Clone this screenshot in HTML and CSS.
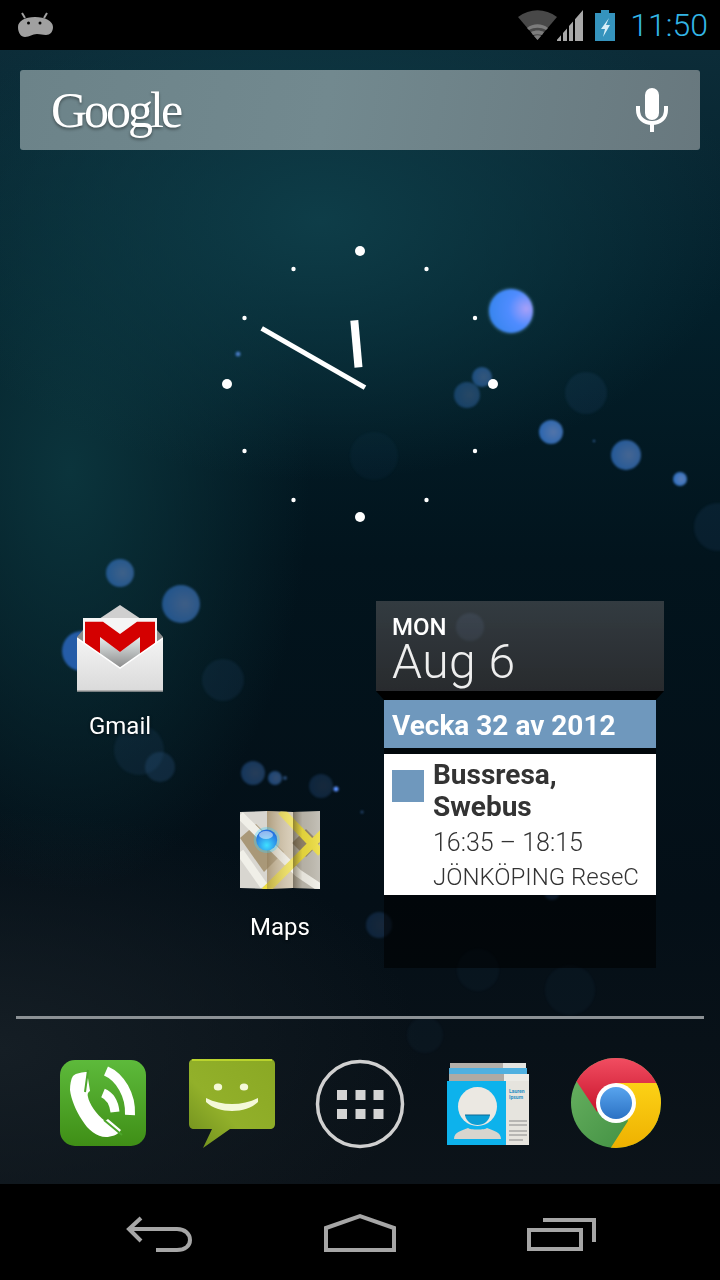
FILE: index.html
```html
<!DOCTYPE html>
<html lang="en">

<head>
    <meta charset="UTF-8">
    <title>Home</title>
    <link rel="stylesheet" href="styles.css">
</head>

<body>
    <div class="status">
        <svg class="st-android" viewBox="18 10 36 30">
            <path d="M22 13l3 5M47 13l-3 5" class="st-ear" />
            <path d="M18 27c0-6 7-10 17-10s18 4 18 10c0 5-3 8-7 8-4 0-5-1-9-1-5 0-7 3-12 3-4 0-7-4-7-10z" class="st-head" />
            <circle cx="28.500" cy="23" r="1.500" class="st-eye" />
            <circle cx="40" cy="23" r="1.500" class="st-eye" />
        </svg>
        <div class="status-right">
            <svg class="st-wifi" viewBox="517 8 40 34">
                <path d="M517 17c12-9 27-9 39 0l-19.500 23z" class="wifi-off" />
                <path d="M526 28c6-5 15-5 21 0l-2 2c-5-3-12-3-17 0z" class="wifi-mid" />
                <path d="M530 32c4-2 9-2 13 0l-2 3c-3-1-6-1-9 0z" class="wifi-mid" />
                <path d="M533 36c2-1 5-1 7 0l-3.500 4z" class="wifi-mid" />
            </svg>
            <svg class="st-signal" viewBox="554 8 29 33">
                <path d="M556 40v-1.200l4-4.500v5.700zM562 40V32l4-4.600V40zM568 40V25l4-4.500V40zM574 40V18.200l8-9.200v31z" class="signal" />
            </svg>
            <svg class="st-battery" viewBox="594 8 20 33">
                <path d="M600 9h8v3h6v28h-20V12h6z" class="battery" />
                <path d="M608 17l-8 11h4l-2 8 7-12h-4l3-7z" class="bolt" />
            </svg>
            <span class="st-time">11:50</span>
        </div>
    </div>

    <div class="home">
        <svg class="bokeh" viewBox="0 50 720 1134">
            <defs>
                <radialGradient id="glow" cx="85%" cy="45%" r="80%">
                    <stop offset="0" stop-color="#a8a0f8" />
                    <stop offset="0.5" stop-color="#4f8cff" />
                    <stop offset="1" stop-color="#3a86f0" />
                </radialGradient>
                <radialGradient id="mid" cx="60%" cy="50%" r="60%">
                    <stop offset="0" stop-color="#5c7fb8" />
                    <stop offset="1" stop-color="#2f6fc0" />
                </radialGradient>
            </defs>
            <g class="soft">
                <circle cx="511" cy="311" r="24" fill="#8fd0ff" class="o-2" />
                <circle cx="511" cy="311" r="22" fill="url(#glow)" />
                <circle cx="551" cy="432" r="12" fill="url(#mid)" class="o-9" />
                <circle cx="626" cy="455" r="15" fill="url(#mid)" class="o-7" />
                <circle cx="680" cy="479" r="7" fill="url(#mid)" />
                <circle cx="482" cy="377" r="10" fill="url(#mid)" class="o-5" />
                <circle cx="467" cy="395" r="13" fill="url(#mid)" class="o-4" />
                <circle cx="238" cy="354" r="2.500" fill="url(#mid)" />
                <circle cx="594" cy="441" r="1" fill="url(#mid)" />
                <circle cx="586" cy="393" r="21" class="dim o-2" />
                <circle cx="374" cy="456" r="24" class="dim o-1" />
                <circle cx="718" cy="527" r="24" class="dim o-2" />
                <circle cx="120" cy="573" r="14" fill="url(#mid)" class="o-6" />
                <circle cx="181" cy="604" r="19" fill="url(#mid)" class="o-6" />
                <circle cx="82" cy="651" r="20" fill="#2f6fd0" class="o-7" />
                <circle cx="223" cy="680" r="21" class="dim o-2" />
                <circle cx="139" cy="750" r="25" class="dim o-2" />
                <circle cx="160" cy="767" r="15" class="dim o-3" />
                <circle cx="253" cy="773" r="12" fill="url(#mid)" class="o-4" />
                <circle cx="275" cy="778" r="7" fill="url(#mid)" class="o-5" />
                <circle cx="285" cy="778" r="2" fill="url(#mid)" class="o-5" />
                <circle cx="321" cy="786" r="12" fill="url(#mid)" class="o-3" />
                <circle cx="336" cy="789" r="2.500" fill="#5a90ff" />
                <circle cx="362" cy="812" r="1.500" fill="url(#mid)" class="o-5" />
                <circle cx="470" cy="627" r="14" fill="#5c7fb8" class="o-9" />
                <circle cx="379" cy="925" r="13" fill="url(#mid)" class="o-3" />
                <circle cx="478" cy="970" r="21" class="dim o-1" />
                <circle cx="570" cy="990" r="25" class="dim o-1" />
                <circle cx="425" cy="1035" r="18" class="dim o-1" />
                <circle cx="552" cy="892" r="8" fill="url(#mid)" class="o-4" />
            </g>
        </svg>

        <div class="search">
            <span class="logo">Google</span>
            <svg class="mic" viewBox="634 86 36 48">
                <rect x="645" y="88" width="14" height="32" rx="7" class="mic-fill" />
                <path d="M638 106v4c0 8 6 13 14 13s14-5 14-13v-4" class="mic-arc" />
                <path d="M652 122v10" class="mic-stem" />
            </svg>
        </div>

        <div class="workspace">
            <div class="clock">
                <svg class="clock-face" viewBox="210 234 300 300">
                    <circle cx="360" cy="251" r="5" class="tick" />
                    <circle cx="493" cy="384" r="5" class="tick" />
                    <circle cx="360" cy="517" r="5" class="tick" />
                    <circle cx="227" cy="384" r="5" class="tick" />
                    <circle cx="426.500" cy="269" r="2.200" class="tick" />
                    <circle cx="475" cy="318" r="2.200" class="tick" />
                    <circle cx="475" cy="451" r="2.200" class="tick" />
                    <circle cx="426.500" cy="500" r="2.200" class="tick" />
                    <circle cx="293.500" cy="500" r="2.200" class="tick" />
                    <circle cx="244.500" cy="451" r="2.200" class="tick" />
                    <circle cx="244.500" cy="318" r="2.200" class="tick" />
                    <circle cx="293.500" cy="269" r="2.200" class="tick" />
                    <path d="M354.300 320.300l4.200 47" class="hour-hand" />
                    <path d="M261.700 328.300L365 387.700" class="min-hand" />
                </svg>
            </div>

            <div class="shortcut gmail">
                <svg class="icon-gmail" viewBox="77 605 86 88">
                    <defs>
                        <linearGradient id="env" x1="0" y1="0" x2="0" y2="1">
                            <stop offset="0" stop-color="#f4f4f4" />
                            <stop offset="1" stop-color="#dadada" />
                        </linearGradient>
                        <linearGradient id="inner" x1="0" y1="0" x2="0" y2="1">
                            <stop offset="0" stop-color="#e6eeee" />
                            <stop offset="1" stop-color="#8e8e8e" />
                        </linearGradient>
                    </defs>
                    <path d="M120 605l21 14h-42z" fill="#cfcfcf" />
                    <path d="M77 637l6-7v-8h74v8l6 7v20H77z" fill="#8c8c8c" />
                    <rect x="83" y="618" width="74" height="40" fill="#f5f5f5" />
                    <path d="M100 637l20 15 20-15v30h-40z" fill="url(#inner)" />
                    <path d="M85 621.700h18l17 12.300 17-12.300h18V648l-15 9v-20l-20 15-20-15v20l-15-9z" fill="#d40000" />
                    <path d="M77 638l43 30 43-30v53H77z" fill="url(#env)" />
                    <path d="M77 638l43 30 43-30" class="env-edge" />
                    <path d="M77 691h86" class="env-foot" />
                </svg>
                <span class="label">Gmail</span>
            </div>

            <div class="shortcut maps">
                <svg class="icon-maps" viewBox="240 811 80 79">
                    <defs>
                        <linearGradient id="fold" x1="0" y1="0" x2="1" y2="0">
                            <stop offset="0" stop-color="#4a3e28" stop-opacity="0.55" />
                            <stop offset="0.35" stop-color="#5a4c30" stop-opacity="0.08" />
                            <stop offset="1" stop-color="#ffffff" stop-opacity="0.12" />
                        </linearGradient>
                        <linearGradient id="fold-mid" x1="0" y1="0" x2="1" y2="0">
                            <stop offset="0" stop-color="#8a7450" stop-opacity="0.45" />
                            <stop offset="1" stop-color="#ffffff" stop-opacity="0.25" />
                        </linearGradient>
                        <clipPath id="sheet">
                            <path d="M240 812l27-1 26 1 27-1v78l-27-1-26 1-27-1z" />
                        </clipPath>
                        <radialGradient id="pin" cx="50%" cy="75%" r="65%">
                            <stop offset="0" stop-color="#40e0ff" />
                            <stop offset="1" stop-color="#2470e0" />
                        </radialGradient>
                    </defs>
                    <g clip-path="url(#sheet)">
                        <rect x="240" y="811" width="27" height="79" fill="#d8d6d0" />
                        <rect x="267" y="811" width="26" height="79" fill="#cdbfa4" />
                        <rect x="293" y="811" width="27" height="79" fill="#bcb8ae" />
                        <path d="M240 838l16-14 28 28-20 20z" fill="#a99878" />
                        <path d="M292 843l14-14 14 14-14 14z" fill="#8f8168" />
                        <path d="M240 815l58 58 24 16" class="road-white" />
                        <path d="M240 852l24 34" class="road-white" />
                        <path d="M281 811l40 42" class="road-yellow" />
                        <path d="M324 832l-60 60" class="road-yellow" />
                        <rect x="267" y="811" width="26" height="79" fill="url(#fold-mid)" />
                        <rect x="293" y="811" width="27" height="79" fill="url(#fold)" />
                    </g>
                    <circle cx="266.700" cy="840" r="13" fill="#40d0ff" opacity="0.35" />
                    <circle cx="266.700" cy="840" r="10.500" fill="url(#pin)" />
                    <ellipse cx="266" cy="835" rx="7" ry="4" fill="#ffffff" opacity="0.5" />
                </svg>
                <span class="label">Maps</span>
            </div>

            <div class="agenda">
                <div class="agenda-head">
                    <div class="agenda-day">MON</div>
                    <div class="agenda-date">Aug 6</div>
                </div>
                <div class="agenda-shade"></div>
                <div class="agenda-body">
                    <div class="agenda-week">Vecka 32 av 2012</div>
                    <div class="event">
                        <div class="event-swatch"></div>
                        <div class="event-text">
                            <div class="event-title">Bussresa, Swebus</div>
                            <div class="event-time">16:35 – 18:15</div>
                            <div class="event-place">JÖNKÖPING ReseC</div>
                        </div>
                    </div>
                </div>
            </div>
        </div>

        <div class="divider"></div>

        <div class="dock">
            <svg class="dock-icon" viewBox="40 1054 128 100">
                <defs>
                    <linearGradient id="phone" x1="0" y1="0" x2="0" y2="1">
                        <stop offset="0" stop-color="#5dba3b" />
                        <stop offset="1" stop-color="#3f8f16" />
                    </linearGradient>
                </defs>
                <rect x="60" y="1060" width="86" height="86" rx="15" fill="url(#phone)" />
                <path d="M73 1076c3-3 10-4 14-4l3 19c-2 1-3 3-2 6 1 6 8 17 17 24l3-2 13 11c-3 5-10 7-15 7-9 0-18-7-24-17-6-9-11-21-12-30 0-6 1-11 3-14z" class="handset" />
                <path d="M88 1070l-3 22M104 1120l18 15" class="handset-gap" />
                <path d="M103 1093c7 3 11 10 12 19" class="ring-in" />
                <path d="M106 1071c14 6 25 24 24 44" class="ring-out" />
            </svg>
            <svg class="dock-icon" viewBox="168 1054 128 100">
                <defs>
                    <linearGradient id="sms" x1="0" y1="1" x2="1" y2="0">
                        <stop offset="0" stop-color="#6d8c1c" />
                        <stop offset="0.4" stop-color="#92b02a" />
                        <stop offset="1" stop-color="#8aa824" />
                    </linearGradient>
                </defs>
                <path d="M194 1059h76c3 0 5 2 5 5v60c0 3-2 5-5 5h-40l-27 19 9-19h-18c-3 0-5-2-5-5v-60c0-3 2-5 5-5z" fill="url(#sms)" />
                <path d="M192 1060h80" class="sms-rim" />
                <ellipse cx="218" cy="1087" rx="4.200" ry="3.500" class="sms-face" />
                <ellipse cx="244" cy="1087" rx="4.200" ry="3.500" class="sms-face" />
                <path d="M206 1098c16 8 36 8 52 0v4c-6 6-16 9-26 9s-20-3-26-9z" class="sms-face" />
            </svg>
            <svg class="dock-icon" viewBox="296 1054 128 100">
                <circle cx="360" cy="1104" r="42.500" class="apps-ring" />
                <rect x="337" y="1090" width="10" height="10" class="apps-dot" />
                <rect x="355.500" y="1090" width="10" height="10" class="apps-dot" />
                <rect x="373.500" y="1090" width="10" height="10" class="apps-dot" />
                <rect x="337" y="1109" width="10" height="10" class="apps-dot" />
                <rect x="355.500" y="1109" width="10" height="10" class="apps-dot" />
                <rect x="373.500" y="1109" width="10" height="10" class="apps-dot" />
            </svg>
            <svg class="dock-icon" viewBox="424 1054 128 100">
                <rect x="450" y="1063" width="76" height="8" fill="#b4b0aa" />
                <rect x="503" y="1063" width="23" height="8" fill="#e4e4e0" />
                <rect x="449" y="1068" width="78" height="7" fill="#4fb0e0" />
                <rect x="449" y="1074" width="80" height="8" fill="#aeaaa4" />
                <rect x="504" y="1074" width="25" height="8" fill="#ecebe6" />
                <rect x="447" y="1081" width="59" height="64" fill="#0db2ec" />
                <rect x="506" y="1081" width="23" height="64" fill="#e6e4de" />
                <circle cx="477.500" cy="1106.500" r="19.500" fill="#ebe8e2" />
                <path d="M465 1115h25c-1 6-6 10-12.500 10s-11.500-4-12.500-10z" fill="#0b9fd6" />
                <path d="M465 1115h25" class="card-mouth" />
                <path d="M454 1139c0-7 7-8 14-11 2 2 17 2 19 0 7 3 14 4 14 11z" fill="#d8d5ce" />
                <text x="509" y="1093" class="card-name">Lauren</text>
                <text x="509" y="1099" class="card-name">Ipsum</text>
                <path d="M509 1121h18M509 1125h18M509 1131h18M509 1135h18M509 1140h14" class="card-line" />
            </svg>
            <svg class="dock-icon" viewBox="552 1054 128 100">
                <defs>
                    <clipPath id="chrome-clip"><circle cx="616" cy="1103" r="45" /></clipPath>
                    <linearGradient id="cr-red" x1="0" y1="0" x2="0" y2="1">
                        <stop offset="0" stop-color="#f24e62" />
                        <stop offset="1" stop-color="#c8142c" />
                    </linearGradient>
                    <linearGradient id="cr-yellow" x1="0" y1="0" x2="0" y2="1">
                        <stop offset="0" stop-color="#fcd116" />
                        <stop offset="1" stop-color="#eeb000" />
                    </linearGradient>
                    <linearGradient id="cr-green" x1="0" y1="0" x2="1" y2="1">
                        <stop offset="0" stop-color="#6cb464" />
                        <stop offset="1" stop-color="#3a8a3c" />
                    </linearGradient>
                    <linearGradient id="cr-blue" x1="0" y1="0" x2="0" y2="1">
                        <stop offset="0" stop-color="#58a4ee" />
                        <stop offset="1" stop-color="#2c72c4" />
                    </linearGradient>
                </defs>
                <g clip-path="url(#chrome-clip)">
                    <rect x="570" y="1057" width="92" height="92" fill="url(#cr-green)" />
                    <path d="M570 1057h92v26h-46l-19 29-20-30-7-2z" fill="url(#cr-red)" />
                    <path d="M616 1083h46v66h-52l18-28z" fill="url(#cr-yellow)" />
                </g>
                <circle cx="616" cy="1103" r="20" fill="#ffffff" />
                <circle cx="616" cy="1103" r="16" fill="url(#cr-blue)" />
            </svg>
        </div>
    </div>

    <div class="nav">
        <div class="nav-cell">
            <svg class="nav-icon" viewBox="100 1200 120 60">
                <path d="M142 1218l-12 11 12 12M130 1229h48c8 0 13 5 13 11s-5 10-13 10h-21" class="nav-line" />
            </svg>
        </div>
        <div class="nav-cell">
            <svg class="nav-icon" viewBox="300 1200 120 60">
                <path d="M326 1228l34-12 34 12v22h-68z" class="nav-line" />
            </svg>
        </div>
        <div class="nav-cell">
            <svg class="nav-icon" viewBox="502 1200 120 60">
                <path d="M530 1230h52v19h-52zM544 1220h51v22" class="nav-line" />
            </svg>
        </div>
    </div>
</body>

</html>
```
FILE: styles.css
```css
* {
    box-sizing: border-box;
}

html,
body {
    margin: 0;
    padding: 0;
}

body {
    width: 720px;
    height: 1280px;
    overflow: hidden;
    background-color: #000000;
    font-family: Roboto, "Liberation Sans", sans-serif;
}

/* status bar */
.status {
    display: flex;
    justify-content: space-between;
    align-items: center;
    height: 50px;
    padding: 0 12px 0 18px;
    background-color: #000000;
}

.status-right {
    display: flex;
    align-items: center;
}

.st-android {
    width: 36px;
    height: 30px;
}

.st-head {
    fill: #a0a0a0;
}

.st-ear {
    fill: none;
    stroke: #a0a0a0;
    stroke-width: 2;
}

.st-eye {
    fill: #000000;
}

.st-wifi {
    width: 40px;
    height: 34px;
}

.wifi-off {
    fill: #484848;
}

.wifi-mid {
    fill: #7c7c7c;
}

.st-signal {
    width: 29px;
    height: 33px;
    margin-left: -3px;
}

.signal {
    fill: #a8a8a8;
}

.st-battery {
    width: 20px;
    height: 33px;
    margin-left: 11px;
}

.battery {
    fill: #3593bd;
}

.bolt {
    fill: #d8eef8;
}

.st-time {
    margin-left: 15px;
    font-size: 32px;
    font-weight: 300;
    color: #33b5e5;
    line-height: 50px;
}

/* home screen */
.home {
    position: relative;
    height: 1134px;
    overflow: hidden;
    background:
        radial-gradient(ellipse 420px 260px at 320px 170px, #0e3d48 0%, rgba(14, 61, 72, 0) 100%),
        radial-gradient(ellipse 240px 420px at 70px 420px, #0b343c 0%, rgba(11, 52, 60, 0) 100%),
        radial-gradient(ellipse 420px 240px at 0px 1000px, #151e25 0%, rgba(21, 30, 37, 0) 100%),
        linear-gradient(180deg, #0c2c38 0%, #03202b 22%, #02141d 45%, #040f17 75%, #0c1319 100%);
}

.bokeh {
    position: absolute;
    left: 0;
    top: 0;
    width: 720px;
    height: 1134px;
}

.soft {
    filter: blur(0.8px);
}

.dim {
    fill: #3a6ea8;
}

.o-1 {
    opacity: 0.05;
}

.o-2 {
    opacity: 0.12;
}

.o-3 {
    opacity: 0.22;
}

.o-4 {
    opacity: 0.4;
}

.o-5 {
    opacity: 0.55;
}

.o-6 {
    opacity: 0.65;
}

.o-7 {
    opacity: 0.75;
}

.o-9 {
    opacity: 0.9;
}

.search {
    position: relative;
    display: flex;
    justify-content: space-between;
    align-items: center;
    height: 80px;
    margin: 20px 20px 0;
    padding: 0 30px 0 31px;
    border-radius: 3px;
    background: linear-gradient(100deg, #6c8389 0%, #72898f 45%, #68787e 100%);
}

.logo {
    font-family: "Liberation Serif", serif;
    font-size: 50px;
    letter-spacing: -3px;
    color: #ffffff;
    text-shadow: 0 2px 3px rgba(0, 0, 0, 0.4);
}

.mic {
    width: 36px;
    height: 48px;
}

.mic-fill {
    fill: #ffffff;
}

.mic-arc,
.mic-stem {
    fill: none;
    stroke: #ffffff;
    stroke-width: 4;
}

.workspace {
    position: relative;
    display: grid;
    grid-template-columns: repeat(4, 160px);
    grid-template-rows: repeat(4, 200px);
    margin-top: 40px;
    padding: 0 40px;
}

.clock {
    grid-column: 1 / 5;
    grid-row: 1 / 3;
    display: flex;
    justify-content: center;
    padding-top: 44px;
}

.clock-face {
    width: 300px;
    height: 300px;
}

.tick {
    fill: #ffffff;
}

.hour-hand,
.min-hand {
    fill: none;
    stroke: #ffffff;
}

.hour-hand {
    stroke-width: 8;
}

.min-hand {
    stroke-width: 5;
}

.shortcut {
    display: flex;
    flex-direction: column;
    align-items: center;
}

.gmail {
    grid-column: 1;
    grid-row: 3;
    padding-top: 15px;
}

.maps {
    grid-column: 2;
    grid-row: 4;
    padding-top: 21px;
}

.icon-gmail {
    width: 86px;
    height: 88px;
}

.icon-maps {
    width: 80px;
    height: 79px;
}

.env-edge {
    fill: none;
    stroke: #ffffff;
    stroke-width: 1.5;
}

.env-foot {
    fill: none;
    stroke: #a0a0a0;
    stroke-width: 1.5;
}

.road-white,
.road-yellow {
    fill: none;
    stroke-width: 8;
}

.road-white {
    stroke: #f0efe8;
}

.road-yellow {
    stroke: #ecdc3c;
}

.label {
    margin-top: 19px;
    font-size: 24px;
    line-height: 28px;
    color: #ffffff;
    text-shadow: 0 1px 3px rgba(0, 0, 0, 0.6);
}

.maps .label {
    margin-top: 23px;
}

/* agenda widget */
.agenda {
    grid-column: 3 / 5;
    grid-row: 3 / 5;
    margin: 11px 16px 0;
}

.agenda-head {
    height: 90px;
    padding: 13px 16px 0;
    background: linear-gradient(180deg, rgba(58, 65, 70, 0.88) 0%, rgba(42, 44, 47, 0.95) 100%);
}

.agenda-day {
    font-size: 24px;
    font-weight: 500;
    line-height: 26px;
    color: #ffffff;
}

.agenda-date {
    font-size: 48px;
    font-weight: 300;
    letter-spacing: 0.5px;
    line-height: 44px;
    color: #eeeeee;
}

.agenda-shade {
    height: 9px;
    background-color: #000000;
    clip-path: polygon(0 0, 100% 0, calc(100% - 8px) 100%, 8px 100%);
}

.agenda-body {
    height: 268px;
    margin: 0 8px;
    background-color: rgba(0, 0, 0, 0.55);
}

.agenda-week {
    height: 48px;
    padding-left: 8px;
    font-size: 28px;
    font-weight: 700;
    line-height: 51px;
    color: #ffffff;
    background-color: #6f98bd;
}

.event {
    display: flex;
    height: 141px;
    margin-top: 6px;
    padding: 5px 8px 0;
    background-color: #ffffff;
}

.event-swatch {
    flex: none;
    width: 32px;
    height: 32px;
    margin-top: 11px;
    background-color: #6f98bd;
}

.event-text {
    margin-left: 9px;
    color: #333333;
}

.event-title {
    font-size: 28px;
    font-weight: 700;
    line-height: 32px;
    width: 190px;
}

.event-time {
    margin-top: 3px;
    font-size: 25px;
    font-weight: 300;
    line-height: 34px;
}

.event-place {
    font-size: 24px;
    font-weight: 300;
    line-height: 34px;
    white-space: nowrap;
}

/* dock */
.divider {
    position: relative;
    height: 3px;
    margin: 26px 16px 0;
    background-color: #8c9195;
}

.dock {
    position: relative;
    display: flex;
    padding: 35px 40px 0;
}

.dock-icon {
    width: 128px;
    height: 100px;
}

.handset {
    fill: #ffffff;
}

.handset-gap {
    fill: none;
    stroke: #4da62c;
    stroke-width: 2;
}

.ring-in,
.ring-out {
    fill: none;
    stroke: #ffffff;
}

.ring-in {
    stroke-width: 9;
}

.ring-out {
    stroke-width: 10;
}

.sms-rim {
    fill: none;
    stroke: #c8e030;
    stroke-width: 1.5;
}

.sms-face {
    fill: #f4f8d8;
}

.apps-ring {
    fill: none;
    stroke: #d0d0d0;
    stroke-width: 3.5;
}

.apps-dot {
    fill: #d4d4d4;
}

.card-name {
    font-size: 5px;
    font-weight: 700;
    fill: #2a8ec4;
}

.card-line {
    fill: none;
    stroke: #888888;
    stroke-width: 1;
}

.card-mouth {
    fill: none;
    stroke: #0a6a96;
    stroke-width: 1;
}

/* nav bar */
.nav {
    display: flex;
    justify-content: center;
    height: 96px;
    background-color: #000000;
}

.nav-cell {
    display: flex;
    justify-content: center;
    padding-top: 16px;
    width: 201px;
}

.nav-icon {
    width: 120px;
    height: 60px;
}

.nav-line {
    fill: none;
    stroke: #a6a6a6;
    stroke-width: 4;
}
```
